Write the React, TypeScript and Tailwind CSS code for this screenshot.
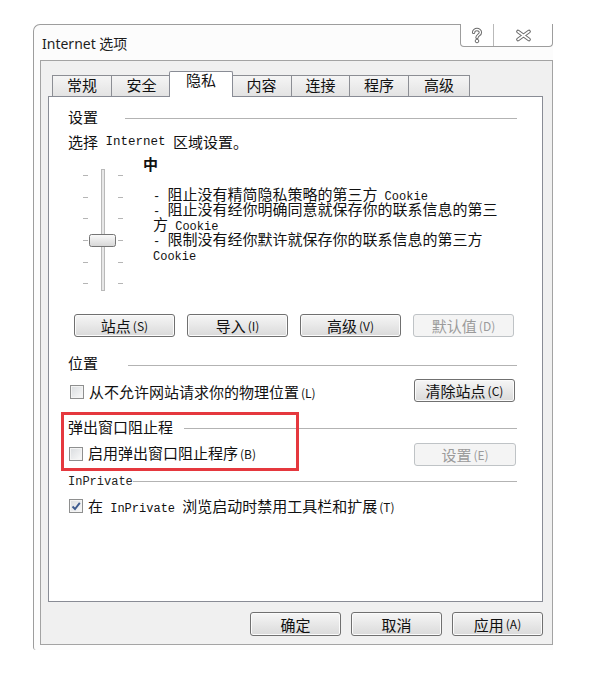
import type { ReactNode } from 'react'

const mono = "font-['Liberation_Mono',monospace]"

const tabs = [
  { label: '常规', w: 'w-[59px]' },
  { label: '安全', w: 'w-[60px]' },
  { label: '隐私', w: 'w-[60px]', active: true },
  { label: '内容', w: 'w-[60px]' },
  { label: '连接', w: 'w-[58px]' },
  { label: '程序', w: 'w-[59px]' },
  { label: '高级', w: 'w-[62px]', last: true },
]

function Btn({ children, w, disabled }: { children: ReactNode; w: string; disabled?: boolean }) {
  return (
    <div
      className={`${w} h-full flex items-center justify-center rounded-[3px] border text-[15px] leading-none ${
        disabled
          ? 'border-[#bfc3c6] bg-[#f4f4f4] text-[#9b9b9b]'
          : 'border-[#707070] bg-linear-to-b from-[#f6f6f6] to-[#dadada] text-[#111] shadow-[inset_0_0_0_1px_#fbfbfb]'
      }`}
    >
      {children}
    </div>
  )
}

function Key({ k }: { k: string }) {
  return <span className="ml-[2px] text-[12px]">({k})</span>
}

function Checkbox({ checked }: { checked?: boolean }) {
  return (
    <div className="w-[14px] h-[14px] shrink-0 border border-[#8e8f8f] bg-linear-to-br from-[#d9dcdf] to-[#fafafa] shadow-[inset_0_0_0_1px_#f4f4f4] flex items-center justify-center">
      {checked && (
        <svg width="12" height="12" viewBox="0 0 12 12">
          <path d="M2.5 6.5 L5 9 L9.8 2.8" fill="none" stroke="#3d5b8f" strokeWidth="1.9" />
        </svg>
      )}
    </div>
  )
}

function Section({ children, gap, lineTop, className = '' }: { children: ReactNode; gap: string; lineTop: string; className?: string }) {
  return (
    <div className={`flex items-center ${className}`}>
      <span className="shrink-0">{children}</span>
      <div className={`flex-1 h-px bg-[#b3b3b3] ${gap} ${lineTop}`} />
    </div>
  )
}

function Slider() {
  const ticks = [23, 45, 66, 88, 110, 131]
  return (
    <svg width="75" height="148" viewBox="0 0 75 148">
      <defs>
        <linearGradient id="thumb" x1="0" y1="0" x2="0" y2="1">
          <stop offset="0" stopColor="#fbfbfb" />
          <stop offset="1" stopColor="#d6d6d6" />
        </linearGradient>
      </defs>
      <rect x="33.5" y="17.5" width="3" height="121" fill="#e7e7e7" stroke="#b9b9b9" />
      {ticks.map((y) => (
        <g key={y}>
          <line x1="15" y1={y + 0.5} x2="20" y2={y + 0.5} stroke="#b5b5b5" />
          <line x1="50" y1={y + 0.5} x2="55" y2={y + 0.5} stroke="#b5b5b5" />
        </g>
      ))}
      <rect x="21.5" y="82.5" width="26" height="12" rx="2" fill="url(#thumb)" stroke="#757575" />
    </svg>
  )
}

function Line({ children }: { children: ReactNode }) {
  return <div className="h-[15px] leading-[15px] whitespace-nowrap">{children}</div>
}

function M({ children }: { children: ReactNode }) {
  return <span className={`${mono} text-[12px] leading-[15px] whitespace-pre`}>{children}</span>
}

export default function App() {
  return (
    <div className="relative w-[603px] h-[675px] bg-white pl-[33px] pt-[24px] font-['Noto_Sans_CJK_SC',sans-serif] text-[15px] text-[#111]">
      <div className="w-[520px] h-[626px] border-l border-t border-[#9d9d9d] rounded-tl-[7px] rounded-bl-[3px] bg-[#fcfcfc] pl-[6px]">
        {/* title bar */}
        <div className="w-[513px] h-[35px] flex justify-between items-start">
          <div className="pt-[9px] pl-[2px] h-[29px] leading-[20px] text-[14px] text-[#1e1e1e] font-['Noto_Sans','Noto_Sans_CJK_SC',sans-serif]">
            Internet 选项
          </div>
          <div className="-mt-px h-[23px] flex border-x border-b border-[#9d9d9d] rounded-b-[4px] bg-white">
            <div className="w-[33px] flex items-center justify-center border-r border-[#b9b9b9]">
              <svg width="12" height="17" viewBox="0 0 12 17">
                <path d="M2.6 5.4 C2.6 1.6 9.4 1.6 9.4 5.4 C9.4 8 6 8 6 10.6" fill="none" stroke="#6b6b6b" strokeWidth="3.4" strokeLinecap="round" />
                <path d="M2.6 5.4 C2.6 1.6 9.4 1.6 9.4 5.4 C9.4 8 6 8 6 10.6" fill="none" stroke="#fff" strokeWidth="1.4" strokeLinecap="round" />
                <circle cx="6" cy="14" r="1.8" fill="#fff" stroke="#6b6b6b" strokeWidth="1" />
              </svg>
            </div>
            <div className="w-[58px] flex items-center justify-center">
              <svg width="17" height="13" viewBox="0 0 17 13">
                <path d="M3 2.5 L14 10.5 M14 2.5 L3 10.5" fill="none" stroke="#6b6b6b" strokeWidth="3.6" strokeLinecap="round" />
                <path d="M3 2.5 L14 10.5 M14 2.5 L3 10.5" fill="none" stroke="#fff" strokeWidth="1.6" strokeLinecap="round" />
              </svg>
            </div>
          </div>
        </div>

        {/* dialog body */}
        <div className="w-[513px] h-[585px] border border-[#a3a3a3] bg-[#f0f0f0] pt-[10px] pl-[7px]">
          <div className="flex items-end h-[26px] pl-[4px]">
            {tabs.map((t) =>
              t.active ? (
                <div
                  key={t.label}
                  className="relative z-10 w-[64px] -mx-[2px] h-[26px] bg-white border-x border-t border-[#898c95] rounded-t-[2px] flex justify-center leading-[16px]"
                >
                  {t.label}
                </div>
              ) : (
                <div
                  key={t.label}
                  className={`${t.w} h-[22px] border-l border-t ${t.last ? 'border-r' : ''} border-[#8c8e94] bg-linear-to-b from-[#f5f5f5] to-[#e2e2e2] flex justify-center pt-[1px] leading-[16px]`}
                >
                  {t.label}
                </div>
              ),
            )}
          </div>

          <div className="relative -mt-px w-[495px] h-[506px] border border-[#898c95] bg-white pl-[19px] pr-[25px] pt-[10px]">
            <Section gap="ml-[27px]" lineTop="mt-[2px]" className="h-[20px]">
              设置
            </Section>
            <div className="mt-[5px] h-[20px] flex items-center">
              选择<span className={`${mono} text-[12.5px] whitespace-pre`}> Internet </span>区域设置。
            </div>

            <div className="flex h-[148px]">
              <div className="w-[75px] shrink-0">
                <Slider />
              </div>
              <div>
                <div className="mt-[2px] h-[20px] flex items-center font-bold">中</div>
                <div className="mt-[12px] pl-[10px]">
                  <Line>
                    <M>- </M>阻止没有精简隐私策略的第三方<M> Cookie</M>
                  </Line>
                  <Line>
                    <M>- </M>阻止没有经你明确同意就保存你的联系信息的第三
                  </Line>
                  <Line>
                    方<M> Cookie</M>
                  </Line>
                  <Line>
                    <M>- </M>限制没有经你默许就保存你的联系信息的第三方
                  </Line>
                  <Line>
                    <M>Cookie</M>
                  </Line>
                </div>
              </div>
            </div>

            <div className="mt-[14px] h-[23px] flex gap-[12px] pl-[6px]">
              <Btn w="w-[101px]">站点<Key k="S" /></Btn>
              <Btn w="w-[101px]">导入<Key k="I" /></Btn>
              <Btn w="w-[101px]">高级<Key k="V" /></Btn>
              <Btn w="w-[101px]" disabled>默认值<Key k="D" /></Btn>
            </div>

            <Section gap="ml-[30px]" lineTop="mt-[4px]" className="mt-[16px] h-[20px]">
              位置
            </Section>
            <div className="mt-[6px] h-[23px] flex items-center justify-between pl-[2px] pr-[2px]">
              <div className="flex items-center gap-[5px] mt-[3px]">
                <Checkbox />
                <span>从不允许网站请求你的物理位置<Key k="L" /></span>
              </div>
              <Btn w="w-[101px]">清除站点<Key k="C" /></Btn>
            </div>

            <Section gap="ml-[11px]" lineTop="mt-[3px]" className="mt-[15px] h-[20px]">
              弹出窗口阻止程
            </Section>
            <div className="mt-[6px] h-[23px] flex items-center justify-between pl-[1px] pr-px">
              <div className="flex items-center gap-[5px] -mt-[2px]">
                <Checkbox />
                <span>启用弹出窗口阻止程序<Key k="B" /></span>
              </div>
              <Btn w="w-[102px]" disabled>设置<Key k="E" /></Btn>
            </div>

            <Section gap="ml-0" lineTop="mt-[5px]" className="mt-[5px] h-[16px]">
              <span className={`${mono} text-[12px] text-[#222]`}>InPrivate</span>
            </Section>
            <div className="mt-[10px] h-[18px] flex items-center gap-[5px] pl-[1px]">
              <Checkbox checked />
              <span>
                在<span className={`${mono} text-[12px] whitespace-pre`}> InPrivate </span>浏览启动时禁用工具栏和扩展<Key k="T" />
              </span>
            </div>
          </div>

          <div className="w-[495px] mt-[10px] h-[24px] flex justify-end gap-[10px]">
            <Btn w="w-[91px]">确定</Btn>
            <Btn w="w-[91px]">取消</Btn>
            <Btn w="w-[91px]">应用<Key k="A" /></Btn>
          </div>
        </div>
      </div>

      <div className="absolute left-[61px] top-[412px] w-[238px] h-[59px] border-[3px] border-[#e5383e]" />
    </div>
  )
}
